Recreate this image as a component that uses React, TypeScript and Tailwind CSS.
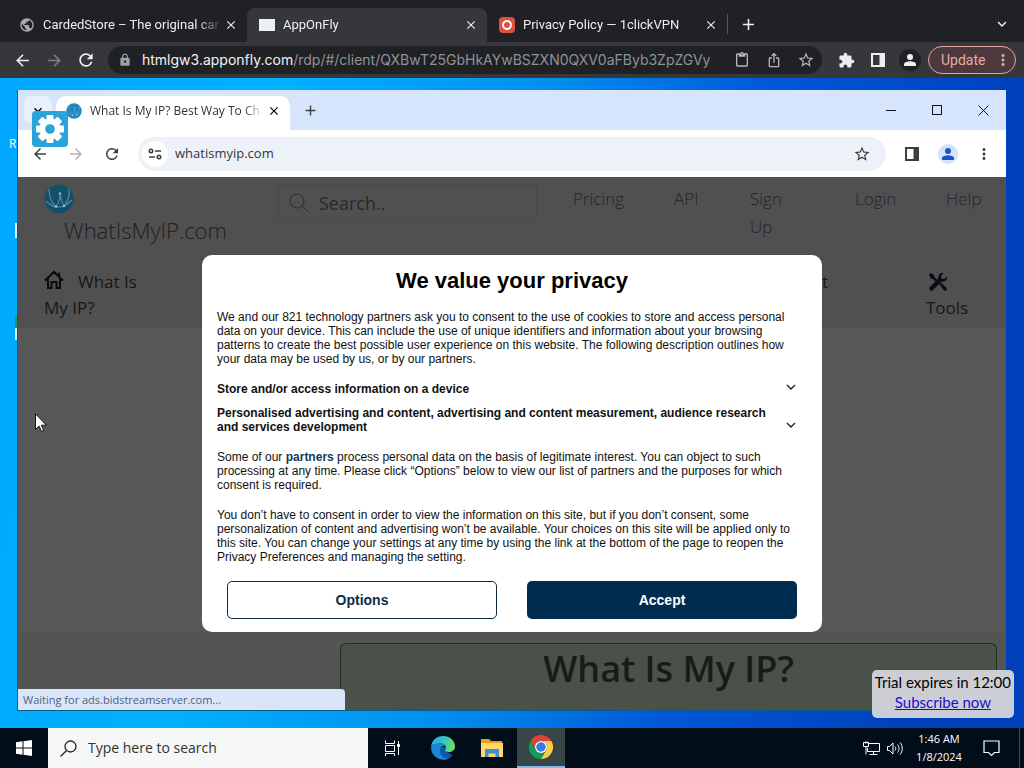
import type { ReactNode } from 'react';
import {
  MdArrowBack,
  MdArrowForward,
  MdAdd,
  MdClose,
  MdExpandMore,
  MdExtension,
  MdLock,
  MdMoreVert,
  MdOutlineContentPaste,
  MdIosShare,
  MdPublic,
  MdRefresh,
  MdStarBorder,
} from 'react-icons/md';

interface IconButtonProps {
  label: string;
  className?: string;
  children: ReactNode;
}

function IconButton({ label, className = '', children }: IconButtonProps) {
  return (
    <button type="button" aria-label={label} className={`flex shrink-0 items-center justify-center ${className}`}>
      {children}
    </button>
  );
}

function SidePanelIcon({ className = '' }: { className?: string }) {
  return (
    <svg viewBox="0 0 14 14" className={className} aria-hidden="true">
      <path fill="currentColor" fillRule="evenodd" d="M0 0h14v14H0zM2 2v10h6.500V2z" />
    </svg>
  );
}

function PersonIcon({ className = '' }: { className?: string }) {
  return (
    <svg viewBox="0 0 12 12" className={className} fill="currentColor" aria-hidden="true">
      <circle cx="6" cy="3" r="3" />
      <path d="M0 12v-1.800C0 8.200 4 7.300 6 7.300s6 .9 6 2.900V12z" />
    </svg>
  );
}

function GlobeLogo({ className = '' }: { className?: string }) {
  return (
    <svg viewBox="0 0 30 30" className={className} aria-hidden="true">
      <circle cx="15" cy="15" r="14.500" fill="currentColor" />
      <g fill="none" stroke="#a8cbd9" strokeOpacity="0.450" strokeWidth="1.200">
        <path d="M5 5c0 7 2 13 7 18 3-4 4-8 4-13 1 5 2 9 4 12 4-5 6-11 5-17M2 17c4 4 7 6 10 6s6 0 8-1 5-3 8-6" />
      </g>
      <g fill="#bcd6e0" fillOpacity="0.700">
        <circle cx="12" cy="22.500" r="1.300" />
        <circle cx="20" cy="22" r="1.300" />
        <circle cx="16" cy="9.500" r="1.300" />
      </g>
    </svg>
  );
}

function HomeIcon() {
  return (
    <svg viewBox="0 0 20 20" className="size-5" aria-hidden="true">
      <path fill="none" stroke="#0b0b0b" strokeWidth="2" d="M1 10.500 10 2l9 8.500M4 8.500V18h3.500v-6h5v6H16V8.500M15 6V2.500" />
    </svg>
  );
}

function ToolsIcon() {
  return (
    <svg viewBox="0 0 20 20" className="size-5" aria-hidden="true">
      <path fill="#0b0b12" d="M1 2.500 2.500 1l3.500 2 .5 2.200 4 4-1.700 1.700-4-4L2.500 6.500zM11.200 12l1.600-1.600 5.700 5.500c1.300 1.500-1 3.800-2.500 2.500z" />
      <path fill="#0b0b12" d="M18.800 4.500 16 7.200l-2.500-.7-.7-2.500L15.500 1.200c-3-.8-5.800 1.700-5 5L1.700 15.200c-1.500 1.800 1.300 4.600 3.100 3.100l8.900-8.800c3.300.8 6-1.900 5.100-5z" />
    </svg>
  );
}

function GearIcon() {
  return (
    <svg viewBox="-15 -15 30 30" className="size-[30px]" aria-hidden="true">
      <g fill="#fff">
        {[0, 45, 90, 135].map((angle) => (
          <rect key={angle} x="-3.500" y="-14" width="7" height="28" rx="1" transform={`rotate(${angle})`} />
        ))}
        <circle r="10.500" />
      </g>
      <circle r="4.800" fill="#29a3d8" />
    </svg>
  );
}

const chromeSectors = [
  { color: '#db4437', angle: 0 },
  { color: '#ffcd40', angle: 120 },
  { color: '#0f9d58', angle: 240 },
];

function ChromeLogo() {
  return (
    <svg viewBox="0 0 48 48" className="size-6" aria-hidden="true">
      {chromeSectors.map((sector) => (
        <path
          key={sector.color}
          fill={sector.color}
          d="M3.200 12A24 24 0 0 1 44.800 12H24A12 12 0 0 0 13.600 30z"
          transform={`rotate(${sector.angle} 24 24)`}
        />
      ))}
      <circle cx="24" cy="24" r="12" fill="#fff" />
      <circle cx="24" cy="24" r="9.500" fill="#3b78e7" />
    </svg>
  );
}

function EdgeLogo() {
  return (
    <svg viewBox="0 0 24 24" className="size-6" aria-hidden="true">
      <defs>
        <linearGradient id="edgeTop" x1="0" x2="1" y1="0.300" y2="0.500">
          <stop offset="0" stopColor="#2aa8e8" />
          <stop offset="0.550" stopColor="#36c8c0" />
          <stop offset="1" stopColor="#6fe060" />
        </linearGradient>
      </defs>
      <path fill="#0c59a4" d="M8 11h8l-1 4 6 4 1-.5A12 12 0 0 1 12 24C8 22 6 18 8 11z" />
      <path fill="url(#edgeTop)" d="M0 11C.5 4.500 5.500 0 12 0c7 0 12 5 12 10.500 0 3.500-2.800 5.500-6 5.500-2.800 0-4-.8-4-1.500 0-.6 1-1 1-2.500 0-2.500-2.500-4.500-6-4.500C5 7.500 1.500 9 0 11z" />
      <path fill="#1b86dc" d="M0 12c1-3 4.500-5 8.500-4.700 2.500.2 4.500 1.200 5.500 2.700-3-.5-5 1.500-5 4.500 0 5 4 9 9 7.500A12 12 0 0 1 0 12z" />
    </svg>
  );
}

function FolderIcon() {
  return (
    <svg viewBox="0 0 22 20" className="h-5 w-[22px]" aria-hidden="true">
      <path fill="#e3a21a" d="M0 1h8l2 2h11v6H0z" />
      <path fill="#ffd867" d="M0 5h22v14H0z" />
      <path fill="#3f8ecf" d="M4 19v-6.500c0-1 .7-1.500 1.500-1.500h11c.8 0 1.500.5 1.500 1.500V19h-3.500v-3.500h-7V19z" />
    </svg>
  );
}

interface OuterTabProps {
  title: string;
  icon: ReactNode;
  active?: boolean;
}

function OuterTab({ title, icon, active = false }: OuterTabProps) {
  return (
    <div className={`flex h-[34px] w-60 min-w-0 items-center pr-2 pl-3 ${active ? 'rounded-t-lg bg-[#36373b]' : ''}`}>
      <span className="flex w-4 shrink-0 justify-center">{icon}</span>
      <span className="ml-2 min-w-0 flex-1 overflow-hidden text-[13px] whitespace-nowrap [mask-image:linear-gradient(to_right,black_85%,transparent)]">
        {title}
      </span>
      <IconButton label={`Close ${title}`} className="size-4">
        <MdClose className="size-[14px]" />
      </IconButton>
    </div>
  );
}

function OuterBrowser() {
  return (
    <header className="bg-[#202124] font-['Roboto',sans-serif] text-[#eceef0]">
      <div className="flex h-[42px] items-end pl-[7px]">
        <OuterTab title="CardedStore – The original car" icon={<MdPublic className="size-4 text-[#a8abb0]" />} />
        <OuterTab title="AppOnFly" active icon={<span className="h-3 w-4 bg-[#e8f1f4]" />} />
        <OuterTab
          title="Privacy Policy — 1clickVPN"
          icon={
            <span className="flex size-4 items-center justify-center rounded-sm bg-[#e0503f]">
              <span className="size-[10px] rounded-full border-2 border-white" />
            </span>
          }
        />
        <div className="mb-2 h-5 w-px bg-[#54565a]" />
        <IconButton label="New tab" className="mb-1 ml-[6px] size-7">
          <MdAdd className="size-[19px]" />
        </IconButton>
        <IconButton label="Search tabs" className="mr-2 mb-1 ml-auto size-7">
          <MdExpandMore className="size-[18px]" />
        </IconButton>
      </div>

      <div className="flex h-9 items-center bg-[#36373b] pr-2 pl-[6px]">
        <IconButton label="Back" className="w-8"><MdArrowBack className="size-[19px]" /></IconButton>
        <IconButton label="Forward" className="w-8 text-[#7e8084]"><MdArrowForward className="size-[19px]" /></IconButton>
        <IconButton label="Reload" className="w-8"><MdRefresh className="size-5" /></IconButton>
        <div className="ml-[6px] flex h-7 min-w-0 flex-1 items-center rounded-full bg-[#202124] pl-[10px] text-[#b4b6ba]">
          <MdLock className="size-[14px] shrink-0 text-[#9aa0a6]" />
          <div role="textbox" aria-label="Address" className="ml-[10px] min-w-0 flex-1 overflow-hidden font-['Inter',sans-serif] text-sm whitespace-nowrap text-[#8f9297]">
            <span className="text-[#f1f3f4]">htmlgw3.apponfly.com</span>/rdp/#/client/QXBwT25GbHkAYwBSZXN0QXV0aFByb3ZpZGVy
          </div>
          <IconButton label="Clipboard" className="w-8"><MdOutlineContentPaste className="size-4" /></IconButton>
          <IconButton label="Share" className="w-8"><MdIosShare className="size-4" /></IconButton>
          <IconButton label="Bookmark" className="w-8"><MdStarBorder className="size-[18px]" /></IconButton>
        </div>
        <IconButton label="Extensions" className="ml-2 w-8"><MdExtension className="size-[17px]" /></IconButton>
        <IconButton label="Side panel" className="w-8"><SidePanelIcon className="size-[14px]" /></IconButton>
        <IconButton label="Profile" className="w-8">
          <span className="flex size-[22px] items-center justify-center rounded-full bg-[#202124]">
            <PersonIcon className="size-3" />
          </span>
        </IconButton>
        <button
          type="button"
          className="ml-[2px] flex h-7 w-[88px] shrink-0 items-center justify-between rounded-full border border-[#dfa5a5] bg-[#4b393d] pr-[3px] pl-3 text-sm text-[#eda9a6]"
        >
          Update
          <MdMoreVert className="size-[18px]" />
        </button>
      </div>
    </header>
  );
}

function InnerTabStrip() {
  return (
    <div className="flex h-10 items-end bg-[#d7e5fc]">
      <IconButton label="Search tabs" className="mb-[6px] ml-[6px] size-7 rounded-lg bg-[#e8f0fe]">
        <MdExpandMore className="size-4" />
      </IconButton>
      <div className="ml-1 flex h-[34px] w-[234px] items-center rounded-t-[10px] bg-white pr-[6px] pb-1 pl-[10px]">
        <GlobeLogo className="size-4 shrink-0 text-[#1d88bd]" />
        <span className="ml-2 min-w-0 flex-1 overflow-hidden text-xs whitespace-nowrap text-[#303338] [mask-image:linear-gradient(to_right,black_88%,transparent)]">
          What Is My IP? Best Way To Ch
        </span>
        <IconButton label="Close tab" className="size-5">
          <MdClose className="size-[14px]" />
        </IconButton>
      </div>
      <IconButton label="New tab" className="mb-[6px] ml-[6px] size-7 text-[#3c4043]">
        <MdAdd className="size-[17px]" />
      </IconButton>
      <div className="ml-auto flex h-10 text-[#101418]">
        <IconButton label="Minimize" className="w-[46px]">
          <span className="h-px w-[10px] bg-current" />
        </IconButton>
        <IconButton label="Maximize" className="w-[46px]">
          <span className="size-[10px] border border-current" />
        </IconButton>
        <IconButton label="Close" className="w-[46px]">
          <svg viewBox="0 0 11 11" className="size-[11px]" aria-hidden="true">
            <path stroke="currentColor" d="m.5.5 10 10m0-10-10 10" />
          </svg>
        </IconButton>
      </div>
    </div>
  );
}

function InnerToolbar() {
  return (
    <div className="flex h-[47px] items-center bg-white px-1 text-[#3c4043]">
      <IconButton label="Back" className="w-9"><MdArrowBack className="size-[18px]" /></IconButton>
      <IconButton label="Forward" className="w-9 text-[#aeb1b5]"><MdArrowForward className="size-[18px]" /></IconButton>
      <IconButton label="Reload" className="w-9"><MdRefresh className="size-[18px]" /></IconButton>
      <div className="ml-2 flex h-[34px] min-w-0 flex-1 items-center rounded-full bg-[#edf2f8] pr-[6px] pl-1">
        <IconButton label="Site information" className="size-[26px] rounded-full bg-white">
          <svg viewBox="0 0 14 12" className="h-3 w-[14px]" fill="none" stroke="currentColor" strokeWidth="1.600" aria-hidden="true">
            <circle cx="3" cy="3" r="1.700" />
            <circle cx="11" cy="9" r="1.700" />
            <path d="M7 3h6M1 9h6" />
          </svg>
        </IconButton>
        <input
          aria-label="Address"
          defaultValue="whatismyip.com"
          className="ml-[7px] min-w-0 flex-1 bg-transparent text-[13px] text-[#33373b] outline-none"
        />
        <IconButton label="Bookmark" className="w-9"><MdStarBorder className="size-[18px]" /></IconButton>
      </div>
      <IconButton label="Side panel" className="ml-2 w-9"><SidePanelIcon className="size-[14px]" /></IconButton>
      <IconButton label="Profile" className="w-9">
        <span className="flex size-5 items-center justify-center rounded-full bg-[#d3e3fd]">
          <PersonIcon className="size-3 text-[#1a56c4]" />
        </span>
      </IconButton>
      <IconButton label="Menu" className="w-9"><MdMoreVert className="size-[18px]" /></IconButton>
    </div>
  );
}

const topLinks = [
  { text: 'Pricing', width: 'w-[101px]' },
  { text: 'API', width: 'w-[76px]' },
  { text: 'Sign Up', width: 'w-[105px]' },
  { text: 'Login', width: 'w-[91px]' },
  { text: 'Help', width: 'w-[60px]' },
];

function SitePage() {
  return (
    <div className="flex flex-1 flex-col bg-[#585858] text-[#242424]">
      <div className="flex h-[151px] flex-col justify-between bg-[#505050] pb-[7px]">
        <div className="flex pl-[26px]">
          <a href="#home" className="w-[234px] shrink-0 pt-[7px]">
            <GlobeLogo className="size-[30px] text-[#124f6b]" />
            <span className="ml-5 block text-[22px] leading-8 font-light text-[#1f1f1f]">WhatIsMyIP.com</span>
          </a>
          <label className="mt-[7px] flex h-[38px] min-w-0 flex-1 items-center border border-[#4a4a4a] pl-[10px]">
            <svg viewBox="0 0 20 20" className="size-5 shrink-0" fill="none" stroke="#2c2c2c" aria-hidden="true">
              <circle cx="8" cy="8" r="7" />
              <path d="m13 13 6 6" />
            </svg>
            <input
              aria-label="Search"
              placeholder="Search.."
              className="ml-[10px] w-full min-w-0 bg-transparent text-lg outline-none placeholder:text-[#292929]"
            />
          </label>
          <nav className="ml-9 flex shrink-0 pt-2 text-[17px] leading-7 font-light">
            {topLinks.map((link) => (
              <a key={link.text} href="#nav" className={`${link.width} ${link.text === 'Sign Up' ? 'pr-14' : ''}`}>
                {link.text}
              </a>
            ))}
          </nav>
        </div>
        <nav className="flex justify-between pr-10 pl-[26px] text-[17px] leading-[26px] text-[#171717]">
          <a href="#my-ip" className="w-[100px]">
            <span className="mr-[14px] inline-block align-[-2px]"><HomeIcon /></span>
            What Is My IP?
          </a>
          <div className="flex">
            <a href="#t" className="w-[104px]">t</a>
            <a href="#tools" className="flex w-10 flex-col">
              <span className="flex h-[26px] items-center pl-[2px]"><ToolsIcon /></span>
              Tools
            </a>
          </div>
        </nav>
      </div>
      <div className="mt-auto bg-[#535552] pt-[11px] pr-[9px] pl-[322px]">
        <div className="h-[67px] rounded-t-md border border-b-0 border-[#1c2f24] bg-[#4a5149]">
          <h1 className="text-center text-4xl leading-[50px] font-semibold text-[#161c17]">What Is My IP?</h1>
        </div>
      </div>
    </div>
  );
}

function Purpose({ children }: { children: ReactNode }) {
  return (
    <button type="button" className="flex w-full items-end justify-between text-left font-bold">
      <span className="w-[560px]">{children}</span>
      <svg viewBox="0 0 16 16" className="mr-2 size-4 shrink-0" fill="none" stroke="#222" strokeWidth="1.400" aria-hidden="true">
        <path d="m4 5 4 4 4-4" />
      </svg>
    </button>
  );
}

function PrivacyDialog() {
  return (
    <div className="absolute inset-0 flex items-center justify-center">
      <section
        role="dialog"
        aria-labelledby="privacy-title"
        className="flex w-[620px] flex-col rounded-[10px] bg-white px-[15px] pt-3 pb-[13px] font-['Liberation_Sans',Arial,sans-serif] text-xs leading-[14px] text-[#111]"
      >
        <h2 id="privacy-title" className="text-center text-[22px] leading-7 font-bold text-black">
          We value your privacy
        </h2>
        <p className="mt-[15px] w-[580px]">
          We and our 821 technology partners ask you to consent to the use of cookies to store and access personal data on
          your device. This can include the use of unique identifiers and information about your browsing patterns to create
          the best possible user experience on this website. The following description outlines how your data may be used by
          us, or by our partners.
        </p>
        <div className="mt-[14px] flex flex-col gap-[10px]">
          <Purpose>Store and/or access information on a device</Purpose>
          <Purpose>
            Personalised advertising and content, advertising and content measurement, audience research and services
            development
          </Purpose>
        </div>
        <p className="mt-4 w-[580px]">
          Some of our <a href="#partners" className="font-bold text-[#14395c]">partners</a> process personal data on the
          basis of legitimate interest. You can object to such processing at any time. Please click “Options” below to view
          our list of partners and the purposes for which consent is required.
        </p>
        <p className="mt-4 w-[580px]">
          You don’t have to consent in order to view the information on this site, but if you don’t consent, some
          personalization of content and advertising won’t be available. Your choices on this site will be applied only to
          this site. You can change your settings at any time by using the link at the bottom of the page to reopen the
          Privacy Preferences and managing the setting.
        </p>
        <div className="mt-[17px] grid grid-cols-2 gap-[30px] px-[10px] text-sm font-bold">
          <button type="button" className="h-[38px] rounded-[5px] border border-[#0f2b40] text-[#0f2d48]">
            Options
          </button>
          <button type="button" className="h-[38px] rounded-[5px] bg-[#002c50] text-white">
            Accept
          </button>
        </div>
      </section>
    </div>
  );
}

function Desktop() {
  return (
    <main className="relative flex flex-1 bg-[linear-gradient(100deg,#00a9ff_0%,#00b0ff_25%,#0090f0_48%,#0058d8_68%,#0040bc_90%)] pt-3 pr-[18px] pb-[17px] pl-[17px] font-['Open_Sans','Noto_Sans',sans-serif]">
      <span className="absolute top-[58px] left-[9px] text-xs leading-4 text-white">R</span>
      <span className="absolute top-[145px] left-[15px] h-[15px] w-1 bg-[#d9f1ff]" />
      <span className="absolute top-[238px] left-[15px] h-3 w-1 bg-[#1c9a6c]" />
      <span className="absolute top-[250px] left-[15px] h-3 w-1 bg-[#d9f1ff]" />
      <div className="relative flex min-w-0 flex-1 flex-col border-b border-l border-[#0b5a80] bg-white">
        <InnerTabStrip />
        <InnerToolbar />
        <div className="relative flex flex-1 flex-col">
          <SitePage />
          <PrivacyDialog />
          <p className="absolute bottom-0 left-0 w-[327px] rounded-tr bg-[#d9e6fa] px-[5px] text-[11px] leading-[21px] text-[#50607a]">
            Waiting for ads.bidstreamserver.com...
          </p>
        </div>
      </div>
      <IconButton label="Settings" className="absolute top-[33px] left-8 size-9 rounded-sm bg-[#29a3d8]">
        <GearIcon />
      </IconButton>
      <svg viewBox="0 0 12 19" className="absolute top-[335px] left-[35px] h-[19px] w-3" aria-hidden="true">
        <path fill="#fff" stroke="#111" strokeWidth="1" d="M.5.8v15.700l3.600-3.400 2.300 5.300 2.300-1-2.300-5.200h5z" />
      </svg>
      <aside className="absolute right-[10px] bottom-[10px] rounded-[5px] bg-[#d3d5dc]/95 px-[3px] pt-[2px] pb-[6px] text-center font-['Lato',sans-serif] text-[15px] leading-5 text-black">
        <p>Trial expires in 12:00</p>
        <a href="#subscribe" className="text-[#1a0fd0] underline">Subscribe now</a>
      </aside>
    </main>
  );
}

function Taskbar() {
  return (
    <footer className="flex h-10 bg-[#010e19] font-['Open_Sans','Noto_Sans',sans-serif] text-white">
      <IconButton label="Start" className="w-12">
        <svg viewBox="0 0 16 16" className="size-4" fill="currentColor" aria-hidden="true">
          <path d="M0 2.200 6.500 1.300v6.200H0zM7.500 1.200 16 0v7.500H7.500zM0 8.500h6.500v6.200L0 13.800zM7.500 8.500H16V16l-8.500-1.200z" />
        </svg>
      </IconButton>
      <label className="flex w-80 items-center bg-[#f5f6f6] pl-3 text-[#222]">
        <svg viewBox="0 0 17 17" className="size-[17px] shrink-0" fill="none" stroke="currentColor" strokeWidth="1.300" aria-hidden="true">
          <circle cx="10.500" cy="6.500" r="5.500" />
          <path d="M6.500 10.500.5 16.500" />
        </svg>
        <input
          aria-label="Type here to search"
          placeholder="Type here to search"
          className="ml-[11px] w-full min-w-0 bg-transparent text-sm outline-none placeholder:text-[#333]"
        />
      </label>
      <IconButton label="Task view" className="w-12">
        <svg viewBox="0 0 17 16" className="h-4 w-[17px]" fill="none" stroke="currentColor" aria-hidden="true">
          <path d="M1.500.500v3h9v-3M1.500 5.500h9v6h-9zM1.500 16v-2.500h9V16M14.500 1v14" />
          <path fill="currentColor" d="M13.500 4.500h2v2h-2z" />
        </svg>
      </IconButton>
      <IconButton label="Edge" className="w-[54px]"><EdgeLogo /></IconButton>
      <IconButton label="File Explorer" className="mr-[3px] w-11"><FolderIcon /></IconButton>
      <IconButton label="Chrome" className="w-12 border-b-2 border-[#7fbdea] bg-[#384648]"><ChromeLogo /></IconButton>
      <div className="ml-auto flex items-center">
        <IconButton label="Network" className="w-6">
          <svg viewBox="0 0 17 15" className="h-[15px] w-[17px]" fill="none" stroke="currentColor" aria-hidden="true">
            <path d="M6 2.500h10.500v8h-12V7M.5 1.500h5v4h-5zM3 5.500v8M10.500 10.500v3M6.500 13.500h8M2.500.5v2M4 .5v2" />
          </svg>
        </IconButton>
        <IconButton label="Volume" className="w-6">
          <svg viewBox="0 0 17 15" className="h-[15px] w-[17px]" fill="none" stroke="currentColor" aria-hidden="true">
            <path d="M.5 5.500h2l3.500-3.500v11l-3.500-3.500h-2zM8 5.500c1 1 1 3 0 4M10.500 3.500c2 2 2 6 0 8M13 1.500c3 3 3 9 0 12" />
          </svg>
        </IconButton>
        <time className="w-16 text-center text-[11px] leading-[18px]">
          1:46 AM
          <br />
          1/8/2024
        </time>
        <IconButton label="Notifications" className="w-10">
          <svg viewBox="0 0 17 17" className="size-[17px]" fill="none" stroke="currentColor" strokeWidth="1.200" aria-hidden="true">
            <path d="M1 1h15v11.500h-4.500l-3 3-3-3H1z" />
          </svg>
        </IconButton>
        <span className="mr-1 ml-2 h-10 w-px bg-[#3f4b54]" />
      </div>
    </footer>
  );
}

export default function App() {
  return (
    <div className="flex min-h-screen flex-col overflow-hidden">
      <OuterBrowser />
      <Desktop />
      <Taskbar />
    </div>
  );
}
